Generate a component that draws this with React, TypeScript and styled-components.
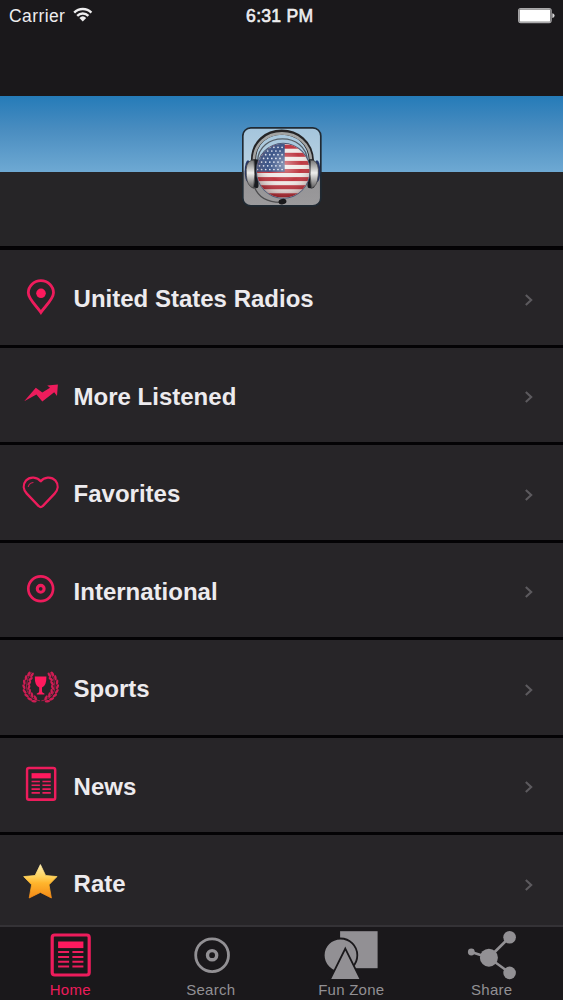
import React from 'react';
import styled, { createGlobalStyle } from 'styled-components';

const PINK = '#ed1c5c';
const GREY = '#929094';

const GlobalStyle = createGlobalStyle`
  body { margin: 0; background: #1a181b; }
  * { box-sizing: border-box; }
`;

const Screen = styled.div`
  width: 563px;
  height: 1000px;
  display: flex;
  flex-direction: column;
  overflow: hidden;
  background: #1a181b;
  font-family: 'Liberation Sans', Arial, sans-serif;
`;

const StatusBar = styled.header`
  flex: none;
  height: 96px;
  display: grid;
  grid-template-columns: 1fr auto 1fr;
  align-items: start;
  padding: 6px 8px 0 9px;
  color: #eeedef;
  line-height: 20px;
`;

const Carrier = styled.div`
  display: flex;
  gap: 8px;
  font-size: 17.5px;
  letter-spacing: 0.4px;
`;

const Clock = styled.div`
  margin-right: 4.5px;
  font-size: 17.6px;
  letter-spacing: 0.25px;
  -webkit-text-stroke: 0.6px currentColor;
`;

const BatterySlot = styled.div`
  display: flex;
  justify-content: flex-end;
  padding-top: 2px;
`;

const Banner = styled.div`
  flex: none;
  height: 76px;
  position: relative;
  background: linear-gradient(#257bb8, #4a8dc0 45%, #6ea9d3);
`;

const AppBadge = styled.div`
  position: absolute;
  top: 31px;
  left: 242px;
  height: 80px;
  svg { display: block; }
`;

const HeaderPanel = styled.div`
  flex: none;
  height: 75px;
  background: #262527;
  border-bottom: 1px solid #030204;
`;

const List = styled.ul`
  flex: 1;
  min-height: 0;
  margin: 0;
  padding: 0;
  list-style: none;
  overflow: hidden;
  background: #272528;
`;

const Row = styled.li`
  height: 97.5px;
  display: flex;
  align-items: center;
  border-top: 3px solid #040305;
  padding: 4px 29px 0 20px;
`;

const RowIcon = styled.svg`
  flex: none;
  width: 40px;
  height: 40px;
  margin-top: -5px;
`;

const RowLabel = styled.span`
  flex: 1;
  margin-left: 13.6px;
  color: #edebee;
  font-size: 24px;
  font-weight: 700;
  line-height: 30px;
`;

const Chevron = styled.svg`
  width: 11px;
  height: 14px;
  margin-top: 0.5px;
`;

const TabBar = styled.nav`
  flex: none;
  height: 75px;
  display: grid;
  grid-template-columns: repeat(4, 140.5px);
  border-top: 2px solid #343236;
  background: #1a181b;
`;

const Tab = styled.div<{ $active?: boolean }>`
  display: flex;
  flex-direction: column;
  align-items: center;
  padding-top: 2px;
  color: ${(p) => (p.$active ? PINK : GREY)};
`;

const TabIcon = styled.svg`
  width: 56px;
  height: 52px;
  flex: none;
`;

const TabLabel = styled.span`
  font-size: 15px;
  line-height: 18px;
  letter-spacing: 0.25px;
`;

const Wifi = () => (
  <svg width="20" height="16" viewBox="0 0 20 16" fill="none" stroke="#eeedef" strokeWidth="2.4">
    <path d="M1.2 6.6 A12.2 12.2 0 0 1 18.4 6.6" />
    <path d="M4.2 9.8 A8 8 0 0 1 15.4 9.8" />
    <path d="M9.8 15.4 L6.4 11.9 A5 5 0 0 1 13.2 11.9 Z" fill="#eeedef" stroke="none" />
  </svg>
);

const Battery = () => (
  <svg width="37" height="16" viewBox="0 0 37 16">
    <rect x="0.6" y="0.6" width="32.6" height="14" rx="2" fill="none" stroke="#aaa9ab" strokeWidth="1.1" />
    <rect x="1.5" y="1.5" width="30.8" height="12.2" rx="1" fill="#fff" />
    <path d="M34.3 5.2 Q36.6 5.4 36.6 7.6 Q36.6 9.8 34.3 10 Z" fill="#d5d4d6" />
  </svg>
);

const stars: [number, number][] = [];
for (let r = 0; r < 7; r++) {
  for (let c = 0; c < 7; c++) {
    stars.push([26 + c * 4.1 + (r % 2) * 2, 29 + r * 3.7]);
  }
}

const AppLogo = () => (
  <svg width="80" height="80" viewBox="10.5 8.7 80 80">
    <defs>
      <linearGradient id="tile" x1="0" y1="0" x2="0" y2="1">
        <stop offset="0" stopColor="#a4c5dc" />
        <stop offset="0.54" stopColor="#bad2e2" />
        <stop offset="0.58" stopColor="#939294" />
        <stop offset="1" stopColor="#9b9a9c" />
      </linearGradient>
      <linearGradient id="metal" x1="0" y1="0" x2="0" y2="1">
        <stop offset="0" stopColor="#777" />
        <stop offset="0.45" stopColor="#eeeeed" />
        <stop offset="1" stopColor="#5b5a5b" />
      </linearGradient>
      <radialGradient id="gloss" cx="0.52" cy="0.4" r="0.6">
        <stop offset="0" stopColor="#fff" stopOpacity="0.45" />
        <stop offset="0.5" stopColor="#fff" stopOpacity="0.08" />
        <stop offset="1" stopColor="#300" stopOpacity="0.4" />
      </radialGradient>
      <clipPath id="globe"><ellipse cx="51.7" cy="52.5" rx="26.3" ry="27" /></clipPath>
    </defs>
    <rect x="11.3" y="9.6" width="78" height="78" rx="8" fill="url(#tile)" stroke="#202a33" strokeWidth="1.7" />
    <path d="M22 43 C21 4 79 4 80 43" fill="none" stroke="#242426" strokeWidth="5.2" />
    <path d="M22.4 43 C22 5.8 78.6 5.8 79.6 43" fill="none" stroke="#a3a4a3" strokeWidth="2.6" />
    <path d="M26 43 C27 13 75 13 76 43" fill="none" stroke="#555e66" strokeWidth="1.3" />
    <ellipse cx="16.5" cy="53" rx="3.3" ry="11" fill="#263667" />
    <ellipse cx="85.5" cy="53" rx="3.3" ry="11" fill="#263667" />
    <rect x="20" y="41" width="7" height="29" rx="2.5" fill="#191b20" />
    <rect x="76" y="41" width="7" height="29" rx="2.5" fill="#191b20" />
    <ellipse cx="51.7" cy="52.5" rx="27.3" ry="28" fill="#4b5a76" />
    <g clipPath="url(#globe)">
      <rect x="24" y="24" width="56" height="57" fill="#eee7e4" />
      {[26.4, 34.5, 42.6, 50.7, 58.8, 66.9, 75].map((y) => (
        <rect key={y} x="24" y={y} width="56" height="4" fill="#b92732" />
      ))}
      <rect x="24" y="24" width="29.2" height="29.5" fill="#2c477e" />
      {stars.filter(([x]) => x < 52).map(([x, y]) => (
        <circle key={`${x}-${y}`} cx={x} cy={y} r="0.85" fill="#e1e7f3" />
      ))}
      <rect x="24" y="24" width="56" height="57" fill="url(#gloss)" />
    </g>
    <path d="M20 42 Q13.5 44 14.8 57 Q15.5 68 22 70 Q24.4 57 22.5 42 Z" fill="url(#metal)" stroke="#464648" strokeWidth="0.8" />
    <path d="M81.5 42 Q88 44 86.7 57 Q86 68 80 70 Q77.6 57 79 42 Z" fill="url(#metal)" stroke="#464648" strokeWidth="0.8" />
    <path d="M23 69 Q29 84 49 84" fill="none" stroke="#4d4d4f" strokeWidth="1.2" />
    <ellipse cx="51" cy="83.4" rx="4" ry="2.7" fill="#19191b" transform="rotate(-12 51 83.4)" />
  </svg>
);

const PinIcon = () => (
  <RowIcon viewBox="0 0 40 40">
    <path d="M20.9 35.4 C17 29.5 8.3 22.2 8.3 15.8 A12.6 12.2 0 0 1 33.5 15.8 C33.5 22.2 24.8 29.5 20.9 35.4 Z" fill="none" stroke={PINK} strokeWidth="2.8" />
    <circle cx="21" cy="16.3" r="4.8" fill="#ff1a5e" />
  </RowIcon>
);

const TrendIcon = () => (
  <RowIcon viewBox="0 0 40 40">
    <path d="M4.2 27.3 L15.8 13.8 L22.3 18.6 L30 13.7 L27.2 11.4 L37.9 10.6 L37 21.9 L34.2 18.2 L22.3 27.4 L16.4 20.6 Z" fill={PINK} />
  </RowIcon>
);

const HeartIcon = () => (
  <RowIcon viewBox="0 0 40 40" fill="none" stroke={PINK} strokeLinecap="round">
    <path d="M20.7 9.2 C17.5 5 10 4 6 8.5 C2.5 12.6 3.3 17.8 6.8 21.6 L18.7 34.1 Q20.7 36.3 22.7 34.1 L34.6 21.6 C38.1 17.8 38.9 12.6 35.4 8.5 C31.4 4 23.9 5 20.7 9.2 Z" strokeWidth="2.3" strokeLinejoin="round" />
    <path d="M8.3 14.5 Q9.2 11.2 13 10.5" strokeWidth="1.2" opacity="0.8" />
  </RowIcon>
);

const DiscIcon = () => (
  <RowIcon viewBox="0 0 40 40" fill="none" stroke={PINK}>
    <circle cx="20.7" cy="19.8" r="12.4" strokeWidth="2.7" />
    <circle cx="20.7" cy="19.8" r="3.4" strokeWidth="3.1" />
  </RowIcon>
);

const leaves: [number, number, number][] = [
  [14, 34.2, 5], [9.8, 32, 22], [6.6, 28.6, 38], [4.6, 24.4, 52], [3.9, 19.8, 68], [4.3, 15.2, 82], [6, 10.8, 100], [8.8, 6.9, 118],
  [15.4, 30.8, 60], [12, 28, 78], [9.7, 24.5, 95], [8.9, 20.4, 112], [9.3, 16.2, 126], [10.6, 12, 138], [12, 8, 125],
];

const LaurelSide = () => (
  <>
    <path d="M20 33.8 C11 32.6 6.4 26 6.4 19 Q6.7 11 11.4 5" fill="none" stroke={PINK} strokeWidth="0.7" />
    {leaves.map(([x, y, a]) => (
      <ellipse key={`${x}-${y}`} cx={x} cy={y} rx="2.7" ry="1.25" fill={PINK} transform={`rotate(${a} ${x} ${y})`} />
    ))}
  </>
);

const TrophyIcon = () => (
  <RowIcon viewBox="0 0 40 40">
    <g opacity="0.85">
      <LaurelSide />
      <g transform="translate(41.4 0) scale(-1 1)"><LaurelSide /></g>
    </g>
    <path d="M14.8 9.4 H26.4 Q26.6 18.6 22 20.4 V24.6 Q22.2 26 24.4 26.4 V27.6 H16.8 V26.4 Q19 26 19.2 24.6 V20.4 Q14.6 18.6 14.8 9.4 Z" fill="#ff1a5e" />
  </RowIcon>
);

const PaperShape = () => (
  <>
    <rect x="1.4" y="1.3" width="37" height="40" rx="2.5" fill="none" stroke={PINK} strokeWidth="3.2" />
    <rect x="7.3" y="7.8" width="25.3" height="6.6" fill="#ff1a5e" />
    {[17.6, 22.4, 27.2, 32].map((y) => (
      <path key={y} d={`M7.3 ${y + 0.8} h11 M21.6 ${y + 0.8} h11`} stroke={PINK} strokeWidth="2" />
    ))}
  </>
);

const NewsIcon = () => (
  <RowIcon viewBox="0 0 40 40">
    <g transform="translate(6 3) scale(0.76 0.79)"><PaperShape /></g>
  </RowIcon>
);

const StarIcon = () => (
  <RowIcon viewBox="0 0 40 40">
    <defs>
      <linearGradient id="gold" x1="0" y1="0" x2="0" y2="1">
        <stop offset="0" stopColor="#ffeeb0" />
        <stop offset="0.35" stopColor="#ffd45e" />
        <stop offset="0.55" stopColor="#ffb52d" />
        <stop offset="1" stopColor="#f48a16" />
      </linearGradient>
    </defs>
    <path d="M20.4 2.6 L25.6 13.5 L37 14.6 L29 22.8 L31.4 36 L20.4 30.4 L9.2 36 L11.6 22.8 L3.7 14.6 L15.1 13.5 Z" fill="url(#gold)" stroke="url(#gold)" strokeWidth="0.8" strokeLinejoin="round" />
  </RowIcon>
);

const rows = [
  { label: 'United States Radios', Icon: PinIcon },
  { label: 'More Listened', Icon: TrendIcon },
  { label: 'Favorites', Icon: HeartIcon },
  { label: 'International', Icon: DiscIcon },
  { label: 'Sports', Icon: TrophyIcon },
  { label: 'News', Icon: NewsIcon },
  { label: 'Rate', Icon: StarIcon },
];

export default function App() {
  return (
    <Screen>
      <GlobalStyle />
      <StatusBar>
        <Carrier>Carrier<Wifi /></Carrier>
        <Clock>6:31 PM</Clock>
        <BatterySlot><Battery /></BatterySlot>
      </StatusBar>
      <Banner>
        <AppBadge><AppLogo /></AppBadge>
      </Banner>
      <HeaderPanel />
      <List>
        {rows.map(({ label, Icon }) => (
          <Row key={label}>
            <Icon />
            <RowLabel>{label}</RowLabel>
            <Chevron viewBox="0 0 11 14">
              <path d="M2.8 2 L8.2 7 L2.8 12" fill="none" stroke="#5c5a5e" strokeWidth="2.1" />
            </Chevron>
          </Row>
        ))}
      </List>
      <TabBar>
        <Tab $active>
          <TabIcon viewBox="0 0 56 52"><g transform="translate(8.8 4.7)"><PaperShape /></g></TabIcon>
          <TabLabel>Home</TabLabel>
        </Tab>
        <Tab>
          <TabIcon viewBox="0 0 56 52" fill="none" stroke={GREY}>
            <circle cx="29.1" cy="26.2" r="16.4" strokeWidth="2.8" />
            <circle cx="29.1" cy="26.2" r="4.6" strokeWidth="3.4" />
          </TabIcon>
          <TabLabel>Search</TabLabel>
        </Tab>
        <Tab>
          <TabIcon viewBox="0 0 56 52" fill={GREY}>
            <rect x="17.1" y="2.2" width="37.5" height="37" />
            <circle cx="17.5" cy="26.3" r="16.8" stroke="#1a181b" strokeWidth="1.8" />
            <path d="M22.3 19.6 L37.8 50.8 H6.8 Z" stroke="#1a181b" strokeWidth="1.8" />
          </TabIcon>
          <TabLabel>Fun Zone</TabLabel>
        </Tab>
        <Tab>
          <TabIcon viewBox="0 0 56 52" fill={GREY} stroke="none">
            <path d="M45.6 8.3 L24.9 28.7 L45.6 43.7 M24.9 28.7 L7.3 23" fill="none" stroke={GREY} strokeWidth="2.6" />
            <circle cx="24.9" cy="28.7" r="9" />
            <circle cx="45.6" cy="8.3" r="6.3" />
            <circle cx="45.6" cy="43.9" r="6.3" />
            <circle cx="7.3" cy="23" r="3.4" />
          </TabIcon>
          <TabLabel>Share</TabLabel>
        </Tab>
      </TabBar>
    </Screen>
  );
}
